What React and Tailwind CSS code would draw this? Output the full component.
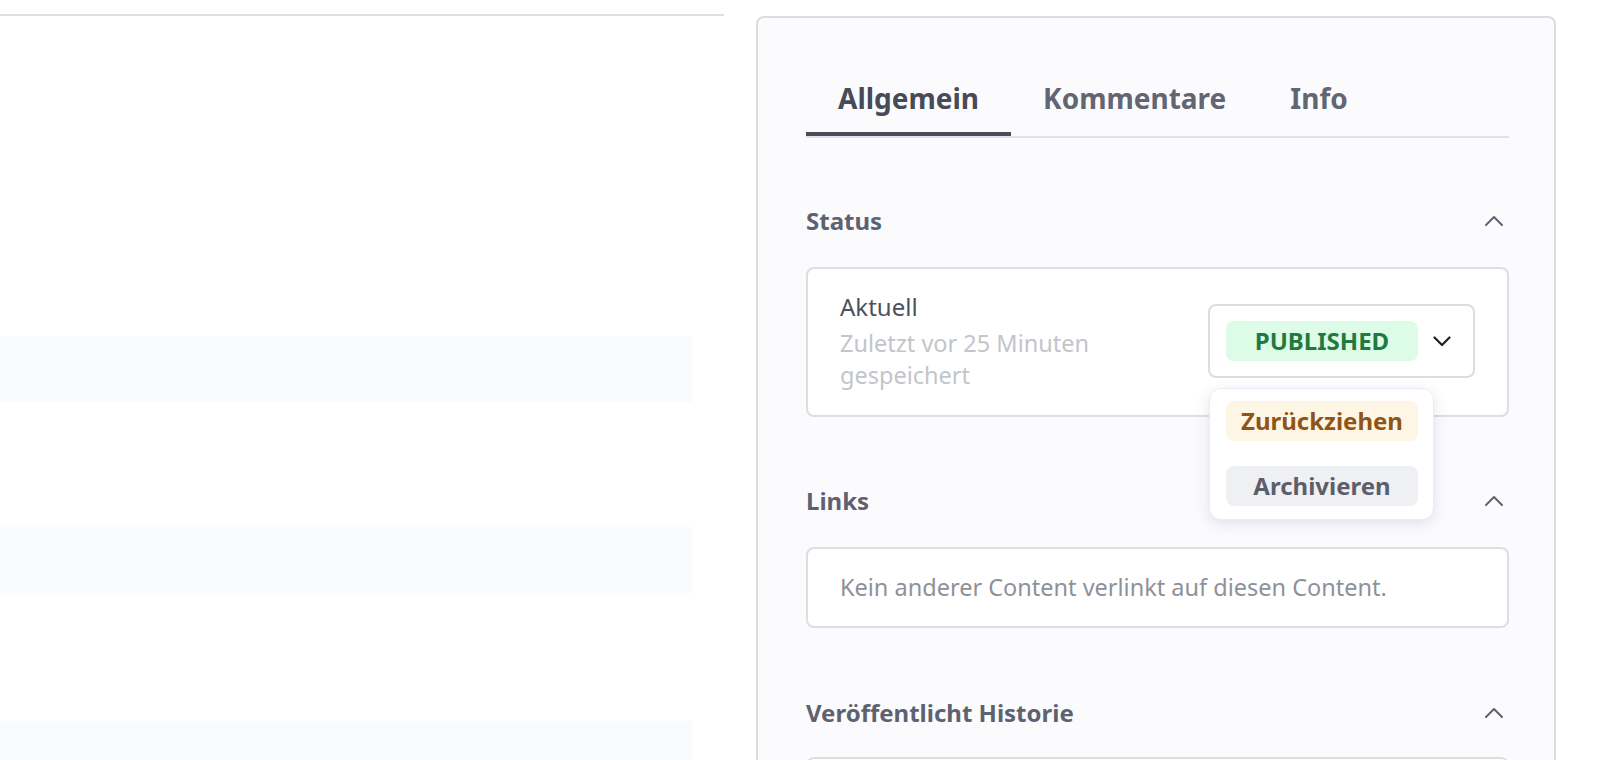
import React from 'react';

const ChevronUp = () => (
  <svg width="18" height="10" viewBox="0 0 18 10" fill="none" className="mr-[6px]">
    <polyline points="1,9 9,1 17,9" stroke="#5f6371" strokeWidth="2" strokeLinecap="round" strokeLinejoin="round" />
  </svg>
);

const ChevronDown = () => (
  <svg width="18" height="11" viewBox="0 0 18 11" fill="none">
    <polyline points="1.5,1.5 9,9 16.5,1.5" stroke="#1f2023" strokeWidth="2.2" strokeLinecap="round" strokeLinejoin="round" />
  </svg>
);

const SectionHeading = ({ title }) => (
  <div className="flex items-center justify-between h-[32px]">
    <span className="text-[24px] leading-[32px] font-bold text-[#5e6270]">{title}</span>
    <ChevronUp />
  </div>
);

const tabs = ['Allgemein', 'Kommentare', 'Info'];

export default function App() {
  return (
    <div className="w-[1620px] h-[760px] overflow-hidden bg-white flex items-start font-['Noto_Sans',sans-serif]">
      {/* list side, only the zebra rows are visible */}
      <div className="w-[724px] mt-[14px] border-t-2 border-[#e0e0e0] pt-[320px] flex flex-col">
        <div className="w-[692px] h-[66px] bg-[#fafbfd]" />
        <div className="w-[692px] h-[66px] mt-[125px] bg-[#fafbfd]" />
        <div className="w-[692px] h-[66px] mt-[128px] bg-[#fafbfd]" />
      </div>

      {/* detail panel */}
      <div className="ml-[32px] mt-[16px] w-[800px] h-[800px] border-2 border-[#dddde0] rounded-[8px] bg-[#fbfbfd] pl-[48px] pr-[45px] pt-[60px]">
        <div className="flex border-b-2 border-[#e1e2e5]">
          {tabs.map((tab, i) => (
            <button
              key={tab}
              className={
                i === 0
                  ? 'px-[32px] pb-[14px] border-b-4 border-[#4a4d59] text-[28px] leading-[40px] font-bold text-[#474b57]'
                  : 'px-[32px] pb-[14px] border-b-4 border-transparent text-[28px] leading-[40px] font-bold text-[#626673]'
              }
            >
              {tab}
            </button>
          ))}
        </div>

        {/* Status */}
        <div className="mt-[67px]">
          <SectionHeading title="Status" />
          <div className="mt-[30px] border-2 border-[#dddee1] rounded-[8px] bg-white pl-[32px] pr-[32px] pt-[22px] pb-[24px] flex items-center justify-between">
            <div className="w-[300px]">
              <div className="text-[24px] leading-[32px] mb-[4px] text-[#4d515c]">Aktuell</div>
              <div className="text-[23.5px] leading-[32px] text-[#c3c5ca]">Zuletzt vor 25 Minuten gespeichert</div>
            </div>
            <div className="relative">
              <div className="w-[267px] h-[74px] border-2 border-[#dcdde0] rounded-[8px] bg-white flex items-center pl-[16px] gap-[15px]">
                <span className="w-[192px] h-[40px] rounded-[8px] bg-[#dcfce7] text-[#1f7a3f] text-[24px] font-bold flex items-center justify-center">
                  PUBLISHED
                </span>
                <ChevronDown />
              </div>
              <div className="absolute left-[1px] top-[84px] w-[225px] rounded-[12px] border border-[#ebebf7] bg-white shadow-[0_4px_14px_rgba(90,90,150,0.16)] px-[16px] pt-[12px] pb-[13px] flex flex-col gap-[25px] z-10">
                <span className="w-[192px] h-[40px] rounded-[8px] bg-[#fef6e4] text-[#8f5416] text-[24px] font-bold flex items-center justify-center">
                  Zurückziehen
                </span>
                <span className="w-[192px] h-[40px] rounded-[8px] bg-[#eff0f3] text-[#5b5f6b] text-[24px] font-bold flex items-center justify-center">
                  Archivieren
                </span>
              </div>
            </div>
          </div>
        </div>

        {/* Links */}
        <div className="mt-[68px]">
          <SectionHeading title="Links" />
          <div className="mt-[30px] border-2 border-[#dddee1] rounded-[8px] bg-white px-[32px] pt-[22px] pb-[23px]">
            <p className="text-[23.5px] leading-[32px] text-[#8e9199]">Kein anderer Content verlinkt auf diesen Content.</p>
          </div>
        </div>

        {/* Veröffentlicht Historie */}
        <div className="mt-[69px]">
          <SectionHeading title="Veröffentlicht Historie" />
          <div className="mt-[28px] h-[80px] border-2 border-[#dddee1] rounded-[8px] bg-white" />
        </div>
      </div>
    </div>
  );
}
